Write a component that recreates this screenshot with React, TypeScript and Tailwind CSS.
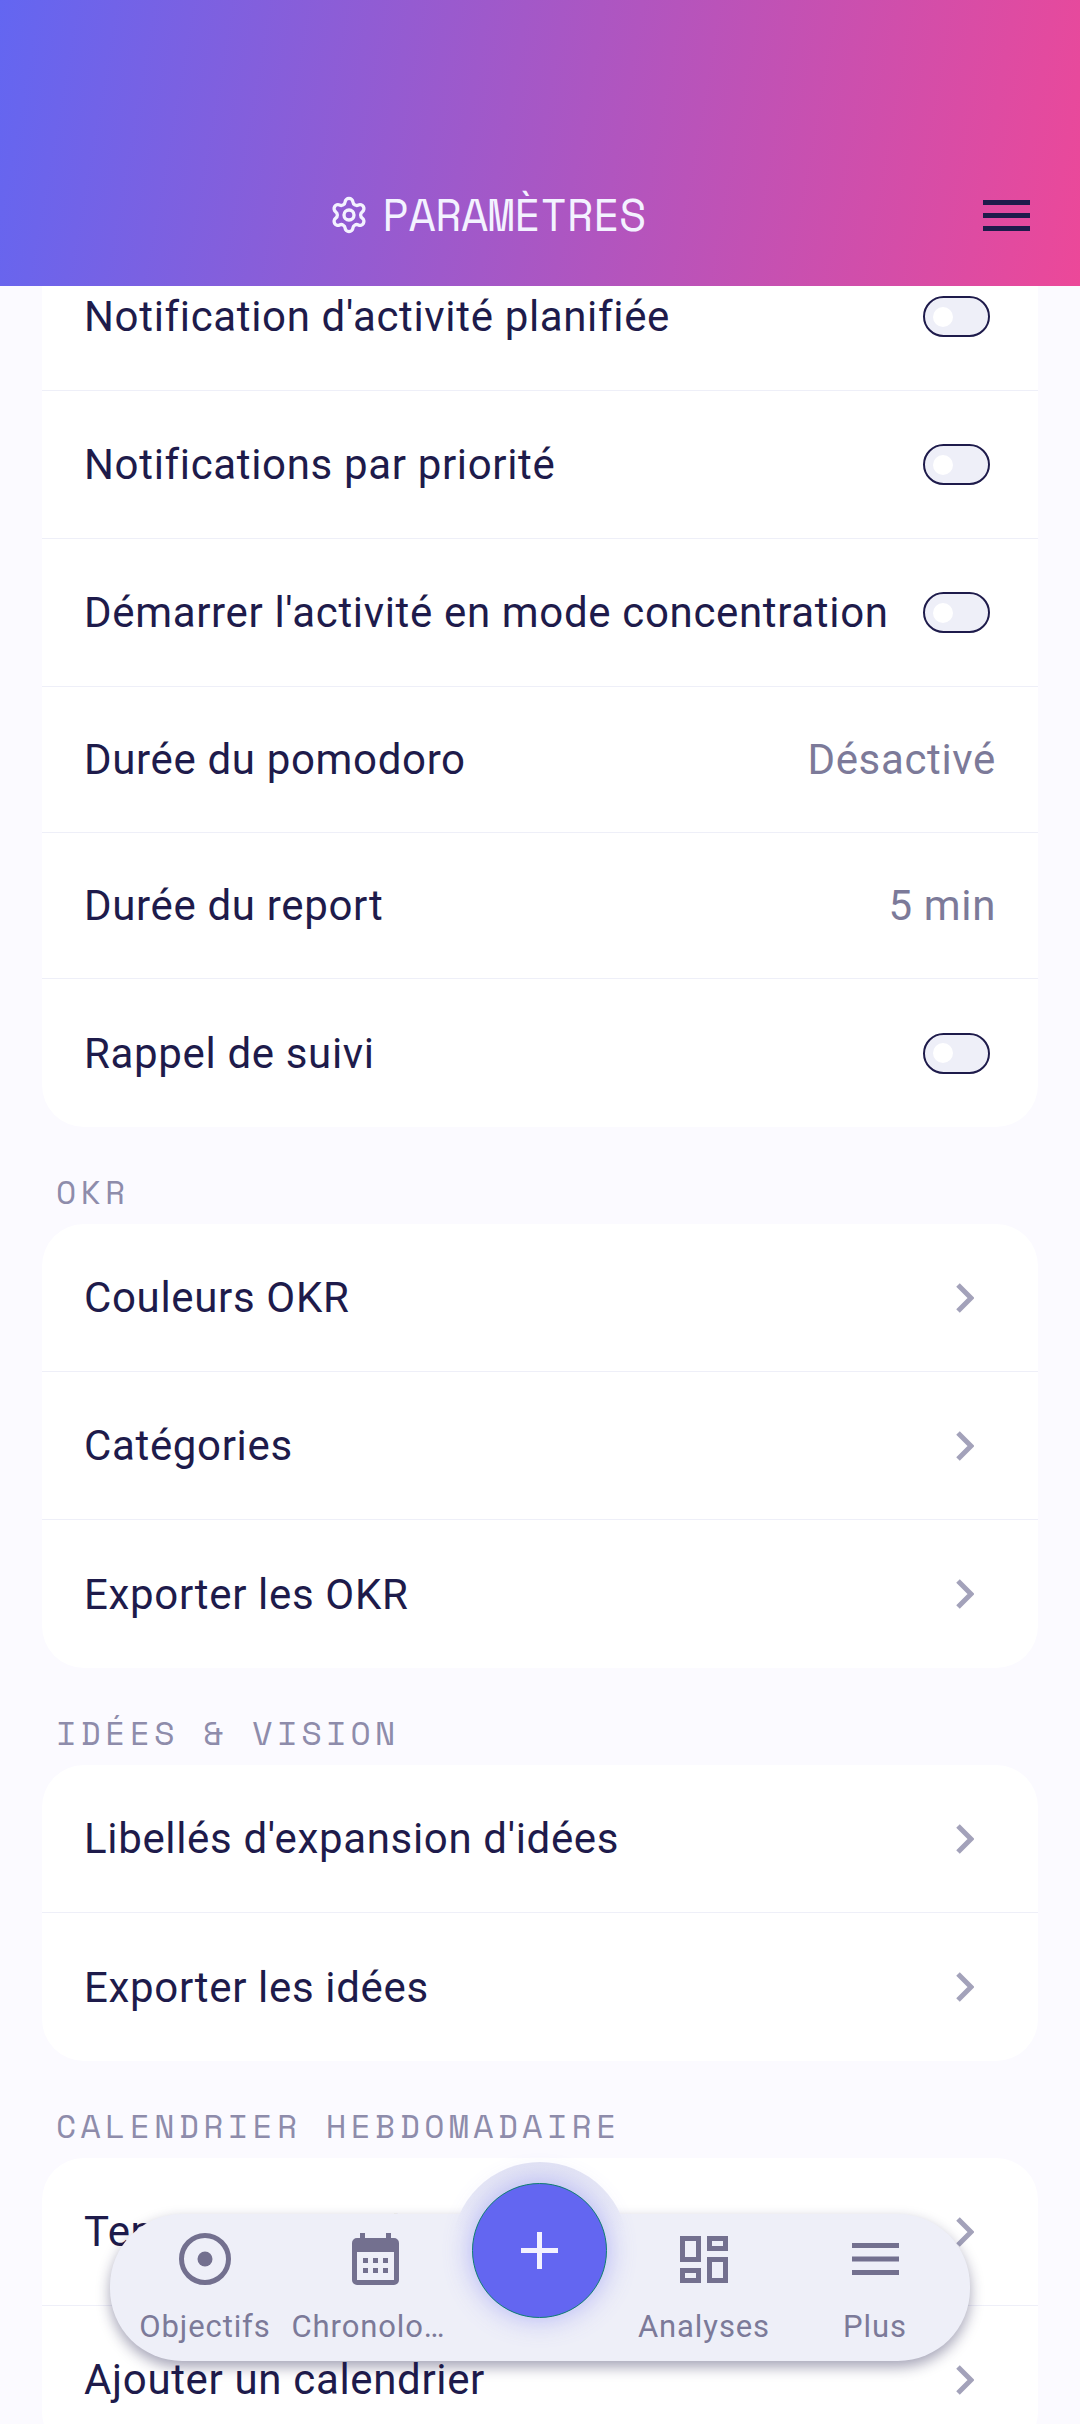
import React from 'react';
import { Settings } from 'lucide-react';

const mono = "font-['Space_Mono','Liberation_Mono',monospace]";

const Toggle = () => (
  <div className="flex h-[41px] w-[67px] items-center rounded-full border-2 border-[#1e1b4b] bg-[#eeeff8] pl-[8px]">
    <div className="h-5 w-5 rounded-full bg-white" />
  </div>
);

const Chevron = () => (
  <svg width="18" height="30" viewBox="0 0 18 30" fill="none" stroke="#a3a2ba" strokeWidth="5">
    <path d="M2 2l13 13L2 28" />
  </svg>
);

const Row = ({ label, value, toggle, link, last }: { label: string; value?: string; toggle?: boolean; link?: boolean; last?: boolean }) => (
  <div className={`flex items-center justify-between pl-[42px] ${value ? 'h-[146px]' : 'h-[148px]'} ${last ? '' : 'border-b border-[#eeeff8]'} ${toggle ? 'pr-[48px]' : link ? 'pr-[64px]' : 'pr-[42px]'}`}>
    <span className="text-[42px] tracking-[0.66px] text-[#1e1b4b]">{label}</span>
    {value && <span className="text-[42px] tracking-[0.66px] text-[#7c7a99]">{value}</span>}
    {toggle && <Toggle />}
    {link && <Chevron />}
  </div>
);

const Section = ({ title, children }: { title: string; children: React.ReactNode }) => (
  <div className="mt-[46px]">
    <div className={`mb-[13px] pl-[14px] text-[33px] leading-[38px] tracking-[4.35px] text-[#8e8cab] ${mono}`}>{title}</div>
    <div className="overflow-hidden rounded-[42px] bg-white">{children}</div>
  </div>
);

const NavItem = ({ label, width, icon }: { label: string; width: string; icon: React.ReactNode }) => (
  <div className={`flex flex-col items-center ${width}`}>
    <div className="flex h-[60px] items-center justify-center">{icon}</div>
    <span className="mt-[19px] max-w-[167px] truncate text-[31px] leading-[38px] tracking-[0.9px] text-[#7c7a99]">{label}</span>
  </div>
);

export default function App() {
  return (
    <div className="relative h-[2424px] w-[1080px] overflow-hidden bg-[#fbfaff] font-['Roboto',sans-serif]">
      <header className="relative z-10 flex h-[286px] items-end bg-[linear-gradient(100deg,#6366f1,#ec4899)] pb-[46px]">
        <div className="flex w-full items-center justify-center pr-[105px]">
          <Settings className="mr-[13px] h-[40px] w-[40px] text-[#f3f2ff]" strokeWidth={2} />
          <span className={`text-[44px] leading-[50px] tracking-[-0.6px] text-[#f3f2ff] ${mono}`}>PARAMÈTRES</span>
        </div>
        <div className="absolute right-[50px] top-[200px] flex flex-col gap-[8px]">
          <div className="h-[5px] w-[47px] bg-[#1e1b4b]" />
          <div className="h-[5px] w-[47px] bg-[#1e1b4b]" />
          <div className="h-[5px] w-[47px] bg-[#1e1b4b]" />
        </div>
      </header>

      <main className="h-[2138px] overflow-hidden px-[42px]">
        <div className="-mt-[43px] overflow-hidden rounded-[42px] bg-white">
          <Row label="Notification d'activité planifiée" toggle />
          <Row label="Notifications par priorité" toggle />
          <Row label="Démarrer l'activité en mode concentration" toggle />
          <Row label="Durée du pomodoro" value="Désactivé" />
          <Row label="Durée du report" value="5 min" />
          <Row label="Rappel de suivi" toggle last />
        </div>
        <Section title="OKR">
          <Row label="Couleurs OKR" link />
          <Row label="Catégories" link />
          <Row label="Exporter les OKR" link last />
        </Section>
        <Section title="IDÉES & VISION">
          <Row label="Libellés d'expansion d'idées" link />
          <Row label="Exporter les idées" link last />
        </Section>
        <Section title="CALENDRIER HEBDOMADAIRE">
          <Row label="Temps de travail" link />
          <Row label="Ajouter un calendrier" link />
        </Section>
      </main>

      <nav className="absolute left-[110px] top-[2214px] flex h-[147px] w-[860px] items-start rounded-[72px] bg-[#eeeff8] pl-[10px] pt-[15px] shadow-[0_6px_14px_rgba(30,27,75,0.4)]">
        <NavItem
          label="Objectifs"
          width="w-[170px]"
          icon={
            <svg width="52" height="52" viewBox="0 0 52 52">
              <circle cx="26" cy="26" r="23.5" fill="none" stroke="#73708f" strokeWidth="5" />
              <circle cx="26" cy="26" r="7.5" fill="#73708f" />
            </svg>
          }
        />
        <NavItem
          label="Chronologie"
          width="w-[170px]"
          icon={
            <svg width="47" height="52" viewBox="0 0 47 52">
              <path fillRule="evenodd" fill="#73708f" d="M8 0h5v5h21V0h5v5h3a5 5 0 0 1 5 5v37a5 5 0 0 1-5 5H5a5 5 0 0 1-5-5V10a5 5 0 0 1 5-5h3zM5 19v28h37V19zM11 25h5v5h-5zM21 25h5v5h-5zM31 25h5v5h-5zM11 35h5v5h-5zM21 35h5v5h-5zM31 35h5v5h-5z" />
            </svg>
          }
        />
        <div className="w-[160px]" />
        <NavItem
          label="Analyses"
          width="w-[168px]"
          icon={
            <svg width="48" height="47" viewBox="0 0 48 47">
              <path fillRule="evenodd" fill="#73708f" d="M0 0h21v26H0zM5 5v16h11V5zM27 0h21v15H27zM32 5v5h11V5zM27 21h21v26H27zM32 26v16h11V26zM0 32h21v15H0zM5 37v5h11v-5z" />
            </svg>
          }
        />
        <NavItem
          label="Plus"
          width="w-[174px]"
          icon={
            <svg width="47" height="32" viewBox="0 0 47 32">
              <path fill="#73708f" d="M0 0h47v5H0zM0 13.500h47v5H0zM0 27h47v5H0z" />
            </svg>
          }
        />
      </nav>

      <div className="absolute left-[452px] top-[2162px] h-[176px] w-[176px] rounded-full bg-[linear-gradient(180deg,#e4e5f4,#eeeff8_40%)]" />
      <button className="absolute left-[472px] top-[2183px] flex h-[135px] w-[135px] items-center justify-center rounded-full border border-[#0f7f70] bg-[#6366f1] shadow-[0_0_28px_rgba(99,102,241,0.45)]">
        <svg width="37" height="37" viewBox="0 0 37 37">
          <path fill="#f3f2ff" d="M16 0h5v16h16v5H21v16h-5V21H0v-5h16z" />
        </svg>
      </button>
    </div>
  );
}
